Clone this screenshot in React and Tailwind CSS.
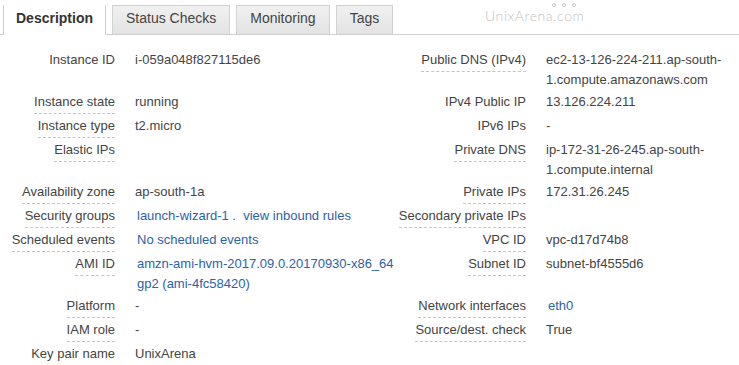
const tabs = ['Description', 'Status Checks', 'Monitoring', 'Tags'];

// each row pairs a left and a right field
const rows = [
  [
    { label: 'Instance ID', value: ['i-059a048f827115de6'] },
    { label: 'Public DNS (IPv4)', tip: true, value: ['ec2-13-126-224-211.ap-south-', '1.compute.amazonaws.com'] },
  ],
  [
    { label: 'Instance state', tip: true, value: ['running'] },
    { label: 'IPv4 Public IP', value: ['13.126.224.211'] },
  ],
  [
    { label: 'Instance type', tip: true, value: ['t2.micro'] },
    { label: 'IPv6 IPs', value: ['-'] },
  ],
  [
    { label: 'Elastic IPs', tip: true, value: [] },
    { label: 'Private DNS', tip: true, value: ['ip-172-31-26-245.ap-south-', '1.compute.internal'] },
  ],
  [
    { label: 'Availability zone', tip: true, value: ['ap-south-1a'] },
    { label: 'Private IPs', tip: true, value: ['172.31.26.245'] },
  ],
  [
    { label: 'Security groups', tip: true, link: true, value: ['launch-wizard-1 .  view inbound rules'] },
    { label: 'Secondary private IPs', tip: true, value: [] },
  ],
  [
    { label: 'Scheduled events', tip: true, link: true, value: ['No scheduled events'] },
    { label: 'VPC ID', tip: true, value: ['vpc-d17d74b8'] },
  ],
  [
    { label: 'AMI ID', tip: true, link: true, value: ['amzn-ami-hvm-2017.09.0.20170930-x86_64', 'gp2 (ami-4fc58420)'] },
    { label: 'Subnet ID', tip: true, value: ['subnet-bf4555d6'] },
  ],
  [
    { label: 'Platform', tip: true, value: ['-'] },
    { label: 'Network interfaces', tip: true, link: true, value: ['eth0'] },
  ],
  [
    { label: 'IAM role', tip: true, value: ['-'] },
    { label: 'Source/dest. check', tip: true, value: ['True'] },
  ],
  [
    { label: 'Key pair name', tip: true, value: ['UnixArena'] },
    null,
  ],
];

function Label({ item }) {
  if (!item) return <div />;
  return (
    <div className="pr-5 pb-[2px] text-right">
      <span
        className={`inline-block leading-[20px] pb-px border-b border-dashed ${
          item.tip ? 'border-[#c4c4c4]' : 'border-transparent'
        }`}
      >
        {item.label}
      </span>
    </div>
  );
}

function Value({ item }) {
  if (!item) return <div />;
  return (
    <div className={`pb-[2px] leading-[20px] whitespace-pre ${item.link ? 'pl-[2px] text-[#2a63ab]' : ''}`}>
      {item.value.map((line, i) => (
        <div key={i}>{line}</div>
      ))}
    </div>
  );
}

export default function App() {
  return (
    <div
      className="w-[739px] h-[365px] overflow-hidden bg-white text-[#444] relative"
      style={{ fontFamily: '"Liberation Sans", Arial, sans-serif' }}
    >
      {/* Tab bar */}
      <div className="flex items-end h-[35px] border-b border-[#cfcfcf] pl-[3px] gap-[6px]">
        {tabs.map((t, i) =>
          i === 0 ? (
            <div
              key={t}
              className="h-[30px] -mb-px pb-[4px] bg-white border-x border-[#cfcfcf] w-[103px] flex items-center justify-center text-[14px] font-bold text-[#333]"
            >
              {t}
            </div>
          ) : (
            <div
              key={t}
              className="h-[29px] pb-[3px] bg-gradient-to-b from-[#f1f1f1] to-[#e3e3e3] border-x border-t border-[#d2d2d2] px-[13px] flex items-center text-[14px] text-[#444]"
            >
              {t}
            </div>
          )
        )}
      </div>

      {/* Watermark */}
      <div className="absolute left-[485px] top-[2px] flex flex-col items-start">
        <div className="flex gap-[6px] ml-[67px] h-[6px] items-center">
          <span className="w-[4px] h-[4px] rounded-full border border-[#c8c8c8]" />
          <span className="w-[4px] h-[4px] rounded-full border border-[#c8c8c8]" />
          <span className="w-[4px] h-[4px] rounded-full border border-[#c8c8c8]" />
        </div>
        <div
          className="text-[14px] leading-[16px] tracking-[0.6px] text-[#c4c4c4] font-light"
          style={{ fontFamily: 'Lato, "Open Sans", sans-serif' }}
        >
          UnixArena.com
        </div>
      </div>

      {/* Details grid */}
      <div className="grid grid-cols-[135px_260px_151px_1fr] pt-[15px] text-[13px]">
        {rows.map(([l, r], i) => (
          <div key={i} className="contents">
            <Label item={l} />
            <Value item={l} />
            <Label item={r} />
            <Value item={r} />
          </div>
        ))}
      </div>
    </div>
  );
}
